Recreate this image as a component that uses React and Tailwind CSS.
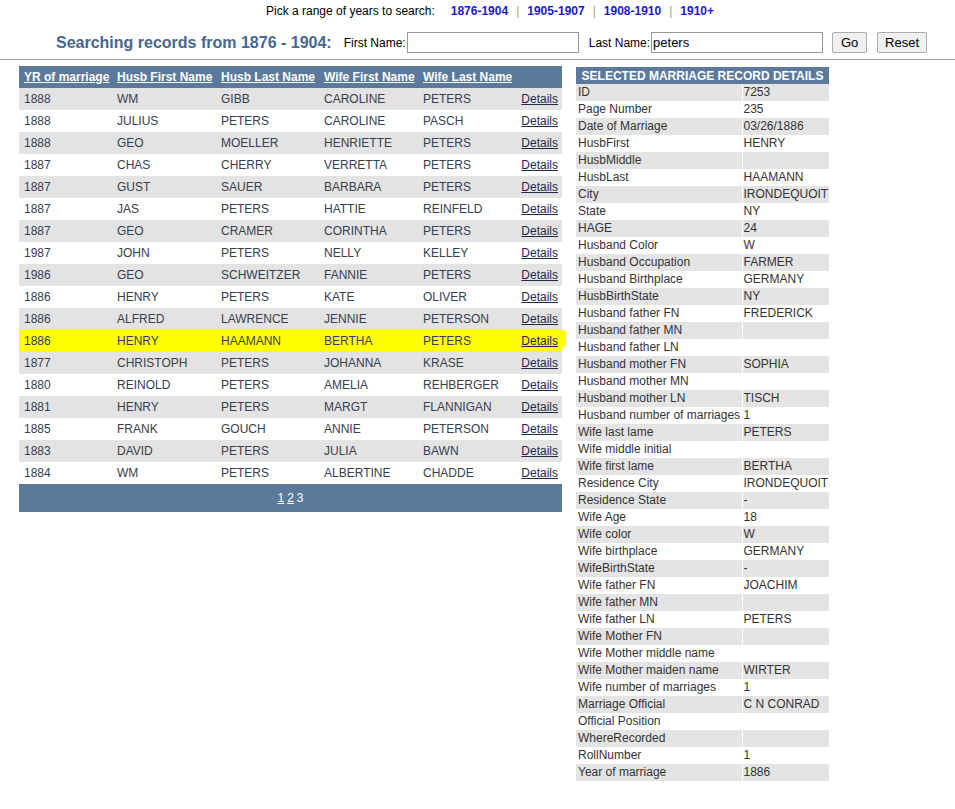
import React from 'react';

const rows = [
    ['1888', 'WM', 'GIBB', 'CAROLINE', 'PETERS'],
    ['1888', 'JULIUS', 'PETERS', 'CAROLINE', 'PASCH'],
    ['1888', 'GEO', 'MOELLER', 'HENRIETTE', 'PETERS'],
    ['1887', 'CHAS', 'CHERRY', 'VERRETTA', 'PETERS'],
    ['1887', 'GUST', 'SAUER', 'BARBARA', 'PETERS'],
    ['1887', 'JAS', 'PETERS', 'HATTIE', 'REINFELD'],
    ['1887', 'GEO', 'CRAMER', 'CORINTHA', 'PETERS'],
    ['1987', 'JOHN', 'PETERS', 'NELLY', 'KELLEY'],
    ['1986', 'GEO', 'SCHWEITZER', 'FANNIE', 'PETERS'],
    ['1886', 'HENRY', 'PETERS', 'KATE', 'OLIVER'],
    ['1886', 'ALFRED', 'LAWRENCE', 'JENNIE', 'PETERSON'],
    ['1886', 'HENRY', 'HAAMANN', 'BERTHA', 'PETERS'],
    ['1877', 'CHRISTOPH', 'PETERS', 'JOHANNA', 'KRASE'],
    ['1880', 'REINOLD', 'PETERS', 'AMELIA', 'REHBERGER'],
    ['1881', 'HENRY', 'PETERS', 'MARGT', 'FLANNIGAN'],
    ['1885', 'FRANK', 'GOUCH', 'ANNIE', 'PETERSON'],
    ['1883', 'DAVID', 'PETERS', 'JULIA', 'BAWN'],
    ['1884', 'WM', 'PETERS', 'ALBERTINE', 'CHADDE'],
];

const selectedRow = 11;

const details = [
    ['ID', '7253'],
    ['Page Number', '235'],
    ['Date of Marriage', '03/26/1886'],
    ['HusbFirst', 'HENRY'],
    ['HusbMiddle', ''],
    ['HusbLast', 'HAAMANN'],
    ['City', 'IRONDEQUOIT'],
    ['State', 'NY'],
    ['HAGE', '24'],
    ['Husband Color', 'W'],
    ['Husband Occupation', 'FARMER'],
    ['Husband Birthplace', 'GERMANY'],
    ['HusbBirthState', 'NY'],
    ['Husband father FN', 'FREDERICK'],
    ['Husband father MN', ''],
    ['Husband father LN', ''],
    ['Husband mother FN', 'SOPHIA'],
    ['Husband mother MN', ''],
    ['Husband mother LN', 'TISCH'],
    ['Husband number of marriages', '1'],
    ['Wife last lame', 'PETERS'],
    ['Wife middle initial', ''],
    ['Wife first lame', 'BERTHA'],
    ['Residence City', 'IRONDEQUOIT'],
    ['Residence State', '-'],
    ['Wife Age', '18'],
    ['Wife color', 'W'],
    ['Wife birthplace', 'GERMANY'],
    ['WifeBirthState', '-'],
    ['Wife father FN', 'JOACHIM'],
    ['Wife father MN', ''],
    ['Wife father LN', 'PETERS'],
    ['Wife Mother FN', ''],
    ['Wife Mother middle name', ''],
    ['Wife Mother maiden name', 'WIRTER'],
    ['Wife number of marriages', '1'],
    ['Marriage Official', 'C N CONRAD'],
    ['Official Position', ''],
    ['WhereRecorded', ''],
    ['RollNumber', '1'],
    ['Year of marriage', '1886'],
];

const headers = ['YR of marriage', 'Husb First Name', 'Husb Last Name', 'Wife First Name', 'Wife Last Name'];
const pads = ['pl-[5px]', 'pl-[4px]', 'pl-[4px]', 'pl-[4px]', 'pl-[4px]'];

const Sep = () => <span className="px-[8px] text-[#a39b78]">|</span>;

export default function App() {
    return (
        <div className="min-h-screen bg-white text-[12px] text-black pt-[3px]" style={{ fontFamily: '"Liberation Sans", Arial, sans-serif' }}>

            {/* ── Year ranges ── */}
            <div className="pl-[266px] leading-[16px] whitespace-nowrap">
                <span className="mr-[16px]">Pick a range of years to search:</span>
                <a href="#" className="font-bold text-[#1a1acc]">1876-1904</a>
                <Sep />
                <a href="#" className="font-bold text-[#1a1acc]">1905-1907</a>
                <Sep />
                <a href="#" className="font-bold text-[#1a1acc]">1908-1910</a>
                <Sep />
                <a href="#" className="font-bold text-[#1a1acc]">1910+</a>
            </div>

            {/* ── Search form ── */}
            <div className="mt-[13px] h-[21px] flex items-center pl-[56px] whitespace-nowrap">
                <span className="text-[16px] font-bold text-[#46678f]">Searching records from 1876 - 1904:</span>
                <span className="ml-[12px] mr-[1px]">First Name:</span>
                <input className="w-[172px] h-[21px] border border-[#999] px-[2px] text-[13px] outline-none" defaultValue="" />
                <span className="ml-[10px] mr-[1px]">Last Name:</span>
                <input className="w-[172px] h-[21px] border border-[#999] px-[1px] text-[13px] outline-none" defaultValue="peters" />
                <button className="ml-[9px] w-[35px] h-[21px] border border-[#adadad] bg-[#f0f0f0] rounded-[2px] text-[13px]">Go</button>
                <button className="ml-[10px] w-[50px] h-[21px] border border-[#adadad] bg-[#f0f0f0] rounded-[2px] text-[13px]">Reset</button>
            </div>

            <div className="mt-[6px] border-t border-[#a0a0a0]" />

            {/* ── Results + details ── */}
            <div className="mt-[6px] flex items-start pl-[19px]">
                <div className="w-[543px] relative">
                    <table className="w-[543px] table-fixed text-[#36404e]">
                        <colgroup>
                            <col className="w-[94px]" />
                            <col className="w-[104px]" />
                            <col className="w-[103px]" />
                            <col className="w-[99px]" />
                            <col className="w-[98px]" />
                            <col className="w-[45px]" />
                        </colgroup>
                        <thead>
                            <tr className="h-[22px] bg-[#5b7a9b]">
                                {headers.map((h, i) => (
                                    <th key={h} className={`${pads[i]} text-left font-bold text-white p-0 whitespace-nowrap`}>
                                        <a href="#" className="underline">{h}</a>
                                    </th>
                                ))}
                                <th />
                            </tr>
                        </thead>
                        <tbody>
                            {rows.map((r, i) => {
                                const bg = i === selectedRow ? 'bg-[#ffff00]' : i % 2 === 0 ? 'bg-[#e3e3e3]' : 'bg-white';
                                return (
                                    <tr key={i} className={`h-[22px] ${bg}`}>
                                        {r.map((c, j) => (
                                            <td key={j} className={`${pads[j]} p-0 whitespace-nowrap`}>{c}</td>
                                        ))}
                                        <td className="text-right pr-[4px]">
                                            <a href="#" className="underline text-[#1c2a45]">Details</a>
                                        </td>
                                    </tr>
                                );
                            })}
                        </tbody>
                    </table>
                    {/* highlighter mark running past the table edge */}
                    <div className="absolute top-[264px] left-[543px] w-[4px] h-[17px] bg-[#ffff00] rounded-r-[3px]" />
                    <div className="h-[28px] bg-[#5b7a9b] flex items-center justify-center text-white pb-[1px]">
                        <a href="#" className="underline">1</a>
                        <span className="w-[3px]" />
                        <a href="#" className="underline">2</a>
                        <span className="w-[3px]" />
                        <span>3</span>
                    </div>
                </div>

                <table className="ml-[14px] mt-[1px] w-[253px] table-fixed text-[#333]">
                    <colgroup>
                        <col className="w-[166px]" />
                        <col className="w-[87px]" />
                    </colgroup>
                    <thead>
                        <tr className="h-[17px] bg-[#5b7a9b]">
                            <th colSpan={2} className="text-center font-bold text-white p-0 leading-[16px] whitespace-nowrap">SELECTED MARRIAGE RECORD DETAILS</th>
                        </tr>
                    </thead>
                    <tbody>
                        {details.map(([k, v], i) => (
                            <tr key={k} className={`h-[17px] ${i % 2 === 0 ? 'bg-[#e4e4e4]' : 'bg-white'}`}>
                                <td className="pl-[2px] p-0 leading-[17px] whitespace-nowrap">{k}</td>
                                <td className="pl-[1px] p-0 leading-[17px] border-l border-white whitespace-nowrap">{v}</td>
                            </tr>
                        ))}
                    </tbody>
                </table>
            </div>
        </div>
    );
}
